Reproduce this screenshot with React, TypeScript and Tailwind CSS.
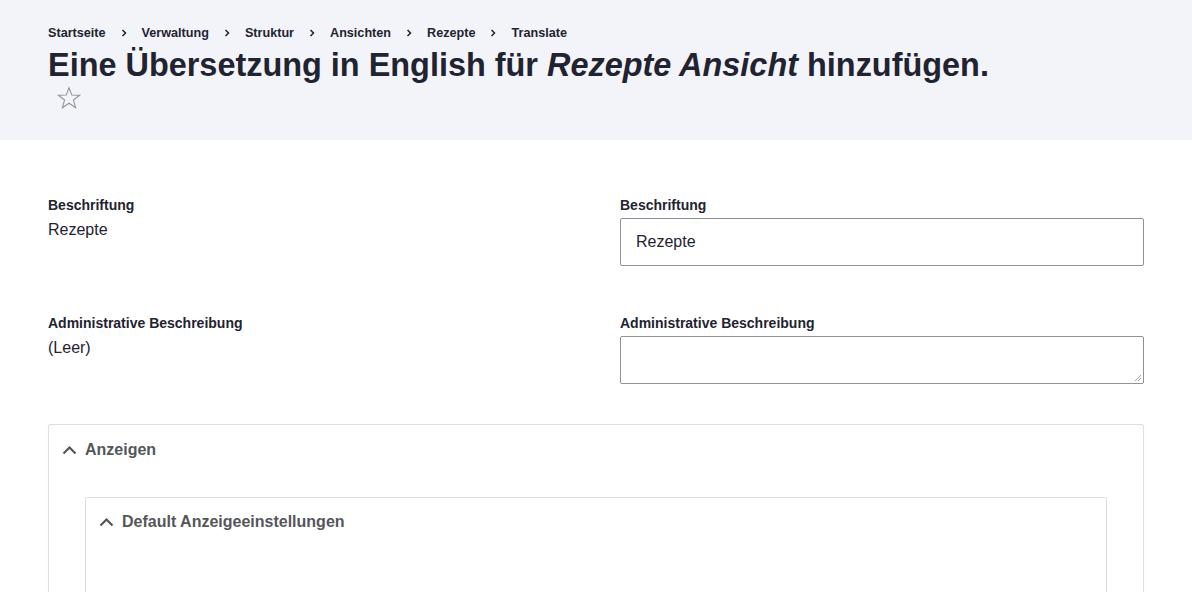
const Chevron = () => (
  <svg width="16" height="14" viewBox="0 0 16 14" className="shrink-0">
    <path d="M1.5 10.5 L7.5 4.5 L13.5 10.5" fill="none" stroke="#55565b" strokeWidth="2.2" />
  </svg>
);

const Sep = () => (
  <svg width="6" height="8" viewBox="0 0 6 8" className="mx-[15px]">
    <path d="M1.5 1 L4.5 4 L1.5 7" fill="none" stroke="#222330" strokeWidth="1.5" />
  </svg>
);

const crumbs = ['Startseite', 'Verwaltung', 'Struktur', 'Ansichten', 'Rezepte', 'Translate'];

export default function App() {
  return (
    <div className="min-h-screen bg-white text-[#222330] font-['Liberation_Sans',Arial,sans-serif]">
      {/* Header */}
      <div className="bg-[#f3f4f9] px-12 pt-[25px] h-[140px]">
        <nav className="flex items-center text-[12.64px] font-bold leading-[16px]">
          {crumbs.map((c, i) => (
            <div key={c} className="flex items-center">
              <span>{c}</span>
              {i < crumbs.length - 1 && <Sep />}
            </div>
          ))}
        </nav>
        <h1 className="text-[32.43px] font-bold leading-[40px] mt-[4px]">
          Eine Übersetzung in English für <em>Rezepte Ansicht</em> hinzufügen.
        </h1>
        <div className="pl-[8px] mt-0">
          <svg width="26" height="26" viewBox="0 0 24 24">
            <path
              d="M12 2.5 L14.6 9.3 L21.8 9.5 L16.1 13.9 L18.1 20.9 L12 16.8 L5.9 20.9 L7.9 13.9 L2.2 9.5 L9.4 9.3 Z"
              fill="none"
              stroke="#8e929c"
              strokeWidth="1"
            />
          </svg>
        </div>
      </div>

      {/* Form */}
      <div className="px-12 pt-[56px]">
        <div className="grid grid-cols-2 gap-x-[48px]">
          <div>
            <div className="text-[14px] font-bold leading-[18px]">Beschriftung</div>
            <div className="text-[16px] leading-[24px] mt-[4px]">Rezepte</div>
          </div>
          <div>
            <div className="text-[14px] font-bold leading-[18px] mb-[4px]">Beschriftung</div>
            <div className="h-[48px] border border-[#8e929c] rounded-[2px] px-[15px] flex items-center text-[16px]">
              Rezepte
            </div>
          </div>
        </div>

        <div className="grid grid-cols-2 gap-x-[48px] mt-[48px]">
          <div>
            <div className="text-[14px] font-bold leading-[18px]">Administrative Beschreibung</div>
            <div className="text-[16px] leading-[24px] mt-[4px]">(Leer)</div>
          </div>
          <div>
            <div className="text-[14px] font-bold leading-[18px] mb-[4px]">Administrative Beschreibung</div>
            <div className="relative h-[48px] border border-[#8e929c] rounded-[2px]">
              <svg width="8" height="8" viewBox="0 0 8 8" className="absolute right-[1px] bottom-[1px]">
                <path d="M1 7 L7 1 M4 7 L7 4" stroke="#8e929c" strokeWidth="0.8" />
              </svg>
            </div>
          </div>
        </div>

        {/* Details */}
        <div className="mt-[40px] border border-[#dedfe4] rounded-[2px] shadow-[0_1px_2px_rgba(0,0,0,0.06)] h-[200px]">
          <div className="flex items-center gap-[7px] pl-[13px] h-[50px] text-[16px] font-bold text-[#55565b]">
            <Chevron />
            <span>Anzeigen</span>
          </div>
          <div className="px-[36px] pt-[22px]">
            <div className="border border-[#dedfe4] rounded-[2px] shadow-[0_1px_2px_rgba(0,0,0,0.06)] h-[200px]">
              <div className="flex items-center gap-[7px] pl-[13px] h-[48px] text-[16px] font-bold text-[#55565b]">
                <Chevron />
                <span>Default Anzeigeeinstellungen</span>
              </div>
            </div>
          </div>
        </div>
      </div>
    </div>
  );
}
